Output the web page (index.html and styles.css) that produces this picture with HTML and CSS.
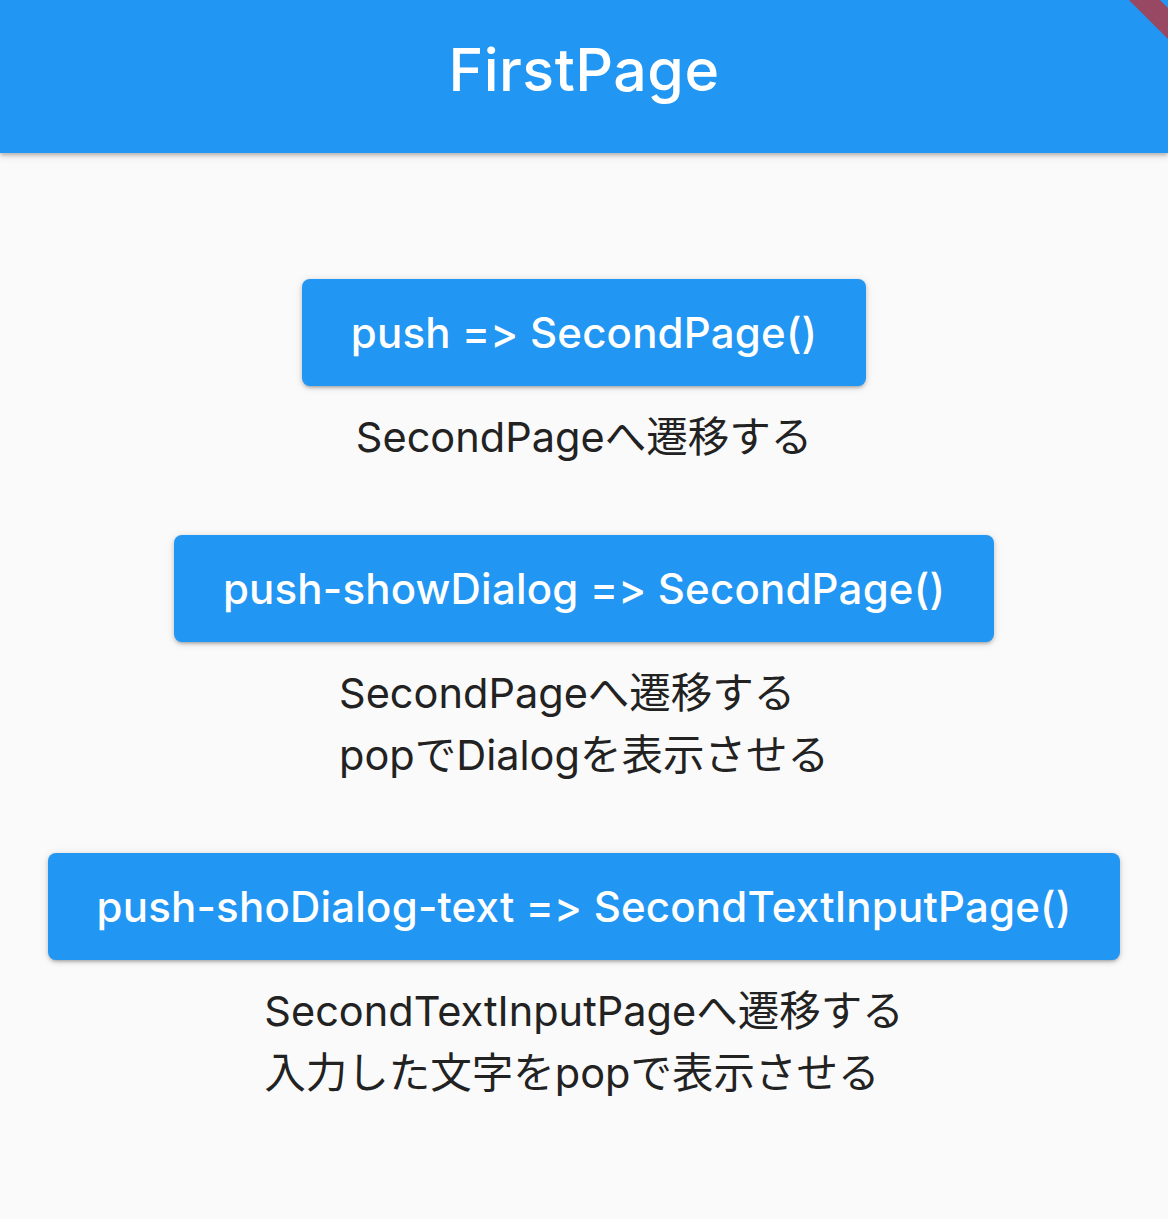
FILE: index.html
```html
<!DOCTYPE html>
<html>
  <head>
    <title>FirstPage</title>
    <link rel="stylesheet" href="styles.css">
  </head>
  <body>
    <header class="app-bar">
      <h1 class="app-bar__title">FirstPage</h1>
      <div class="debug-corner"></div>
    </header>

    <main class="content">
      <section class="nav-item">
        <button class="nav-btn">push =&gt; SecondPage()</button>
        <p class="nav-desc">SecondPageへ遷移する</p>
      </section>

      <section class="nav-item">
        <button class="nav-btn">push-showDialog =&gt; SecondPage()</button>
        <p class="nav-desc">SecondPageへ遷移する<br>popでDialogを表示させる</p>
      </section>

      <section class="nav-item">
        <button class="nav-btn">push-shoDialog-text =&gt; SecondTextInputPage()</button>
        <p class="nav-desc">SecondTextInputPageへ遷移する<br>入力した文字をpopで表示させる</p>
      </section>
    </main>
  </body>
</html>
```

FILE: styles.css
```css
* {
  margin: 0;
  padding: 0;
  box-sizing: border-box;
}

body {
  width: 1168px;
  height: 1219px;
  overflow: hidden;
  background: #fafafa;
  font-family: Inter, "Noto Sans CJK JP", sans-serif;
  font-feature-settings: "calt" 0;
}

.app-bar {
  position: relative;
  height: 153px;
  display: flex;
  justify-content: center;
  align-items: center;
  background: #2196f3;
  box-shadow: 0 2px 4px rgba(0, 0, 0, 0.25), 0 4px 8px rgba(0, 0, 0, 0.08);
  overflow: hidden;
  z-index: 1;
}

.app-bar__title {
  color: #fff;
  font-size: 59px;
  font-weight: 500;
  letter-spacing: 0.5px;
  padding-bottom: 14px;
}

.debug-corner {
  position: absolute;
  top: -22px;
  right: -40px;
  width: 70px;
  height: 22px;
  background: #b6353f;
  transform: rotate(45deg);
  transform-origin: left top;
  opacity: 0.8;
}

.content {
  height: 1066px;
  display: flex;
  flex-direction: column;
  align-items: center;
  justify-content: center;
  gap: 67px;
  padding-top: 10px;
}

.nav-item {
  display: flex;
  flex-direction: column;
  align-items: center;
}

.nav-btn {
  height: 107px;
  padding: 0 49px;
  border: none;
  border-radius: 8px;
  background: #2196f3;
  color: #fff;
  font-family: inherit;
  font-feature-settings: "calt" 0;
  font-size: 42px;
  font-weight: 500;
  letter-spacing: 0.2px;
  box-shadow: 0 3px 3px -2px rgba(0, 0, 0, 0.2), 0 2px 4px rgba(0, 0, 0, 0.14), 0 1px 8px rgba(0, 0, 0, 0.12);
}

.nav-desc {
  margin-top: 20px;
  color: #222;
  font-size: 41.5px;
  line-height: 62px;
  text-align: left;
}
```
